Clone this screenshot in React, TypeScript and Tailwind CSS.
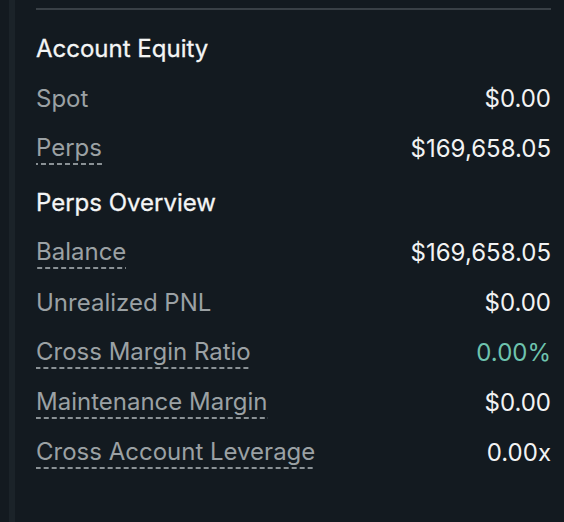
const rows: { label: string; value: string; tip?: boolean; tone?: "green" }[][] = [
  [
    { label: "Spot", value: "$0.00" },
    { label: "Perps", value: "$169,658.05", tip: true },
  ],
  [
    { label: "Balance", value: "$169,658.05", tip: true },
    { label: "Unrealized PNL", value: "$0.00" },
    { label: "Cross Margin Ratio", value: "0.00%", tip: true, tone: "green" },
    { label: "Maintenance Margin", value: "$0.00", tip: true },
    { label: "Cross Account Leverage", value: "0.00x", tip: true },
  ],
];

const HEADINGS = ["Account Equity", "Perps Overview"];

function Row({ label, value, tip, tone }: { label: string; value: string; tip?: boolean; tone?: "green" }) {
  return (
    <div className="flex h-[50px] items-center justify-between">
      <span
        className={
          tip
            ? "pb-[2px] text-[#9ba1a4] bg-[linear-gradient(to_right,#8a9195_65%,transparent_0)] bg-[length:8px_2px] bg-bottom bg-repeat-x leading-[30px]"
            : "text-[#9ba1a4] leading-[30px]"
        }
      >
        {label}
      </span>
      <span className={tone === "green" ? "text-[#6ec3ae]" : "text-[#f2f3f3]"}>{value}</span>
    </div>
  );
}

export default function App() {
  return (
    <div
      className="flex h-[522px] w-[564px] bg-[#131a20] text-[24px]"
      style={{ fontFamily: "Inter, 'Noto Sans', sans-serif" }}
    >
      {/* panel edge */}
      <div className="ml-[9px] w-[6px] bg-[#1b2329]" />

      <div className="flex flex-1 flex-col pl-[21px] pr-[13px]">
        <div className="mt-[8px] h-[2px] bg-[#394046]" />
        <div className="mt-[14px]">
          {rows.map((group, i) => (
            <div key={HEADINGS[i]} className={i > 0 ? "mt-[4px]" : ""}>
              <div className="flex h-[50px] items-center text-[#f4f5f5] [-webkit-text-stroke:0.3px_#f4f5f5]">
                {HEADINGS[i]}
              </div>
              {group.map((r) => (
                <Row key={r.label} {...r} />
              ))}
            </div>
          ))}
        </div>
      </div>
    </div>
  );
}
